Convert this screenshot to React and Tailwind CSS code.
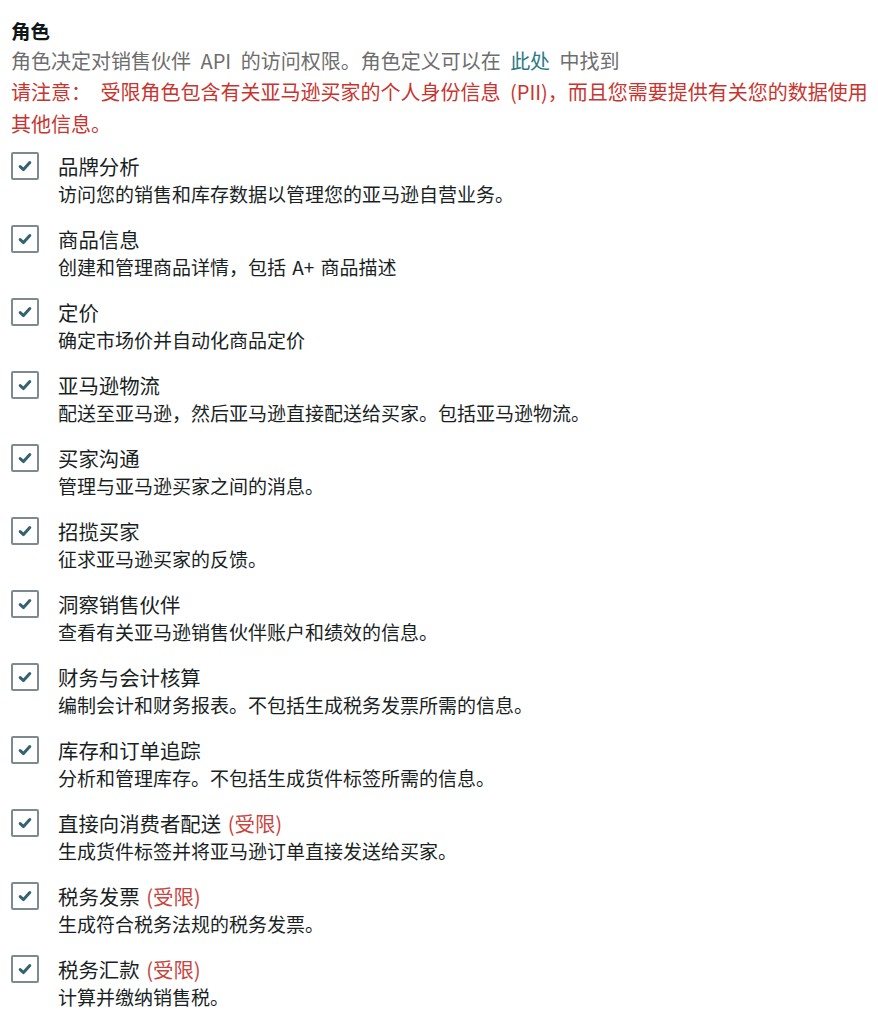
import React from "react";

const items = [
  ["品牌分析", "访问您的销售和库存数据以管理您的亚马逊自营业务。", false],
  ["商品信息", "创建和管理商品详情，包括 A+ 商品描述", false],
  ["定价", "确定市场价并自动化商品定价", false],
  ["亚马逊物流", "配送至亚马逊，然后亚马逊直接配送给买家。包括亚马逊物流。", false],
  ["买家沟通", "管理与亚马逊买家之间的消息。", false],
  ["招揽买家", "征求亚马逊买家的反馈。", false],
  ["洞察销售伙伴", "查看有关亚马逊销售伙伴账户和绩效的信息。", false],
  ["财务与会计核算", "编制会计和财务报表。不包括生成税务发票所需的信息。", false],
  ["库存和订单追踪", "分析和管理库存。不包括生成货件标签所需的信息。", false],
  ["直接向消费者配送", "生成货件标签并将亚马逊订单直接发送给买家。", true],
  ["税务发票", "生成符合税务法规的税务发票。", true],
  ["税务汇款", "计算并缴纳销售税。", true],
];

function Check() {
  return (
    <div className="w-[28px] h-[28px] shrink-0 border-2 border-[#7d8b90] rounded-[2px] bg-white flex items-center justify-center">
      <svg width="16" height="16" viewBox="0 0 16 16">
        <path d="M3.2 8.6 L6.5 11.6 L12.8 4.6" fill="none" stroke="#35626f" strokeWidth="3" strokeLinecap="round" strokeLinejoin="round" />
      </svg>
    </div>
  );
}

export default function App() {
  return (
    <div
      className="w-[878px] h-[1018px] overflow-hidden bg-white px-[11px] pt-[16px]"
      style={{ fontFamily: '"Noto Sans CJK SC", "Noto Sans", sans-serif' }}
    >
      <div className="text-[19.5px] leading-[30px] font-bold text-[#0f1717]">角色</div>
      <div className="text-[20px] leading-[30px] text-[#6e6e6e] [word-spacing:5px]">
        角色决定对销售伙伴 API 的访问权限。角色定义可以在 <span className="text-[#2b7a86]">此处</span> 中找到
      </div>
      <div className="text-[20px] leading-[32px] text-[#c8352f] whitespace-nowrap overflow-hidden [word-spacing:5px]">
        请注意：&nbsp;受限角色包含有关亚马逊买家的个人身份信息 (PII)，而且您需要提供有关您的数据使用
      </div>
      <div className="text-[20px] leading-[32px] text-[#c8352f]">其他信息。</div>
      <div className="mt-[12px] flex flex-col gap-[17px]">
        {items.map(([t, d, r]) => (
          <div key={t} className="flex gap-[19px]">
            <Check />
            <div className="flex flex-col">
              <div className="text-[20.4px] leading-[28px] text-[#1a1f1f] [word-spacing:2px]">
                {t}
                {r && <span className="text-[#c9463f]"> (受限)</span>}
              </div>
              <div className="text-[19px] leading-[28px] text-[#1a1f1f] [word-spacing:2px]">{d}</div>
            </div>
          </div>
        ))}
      </div>
    </div>
  );
}
